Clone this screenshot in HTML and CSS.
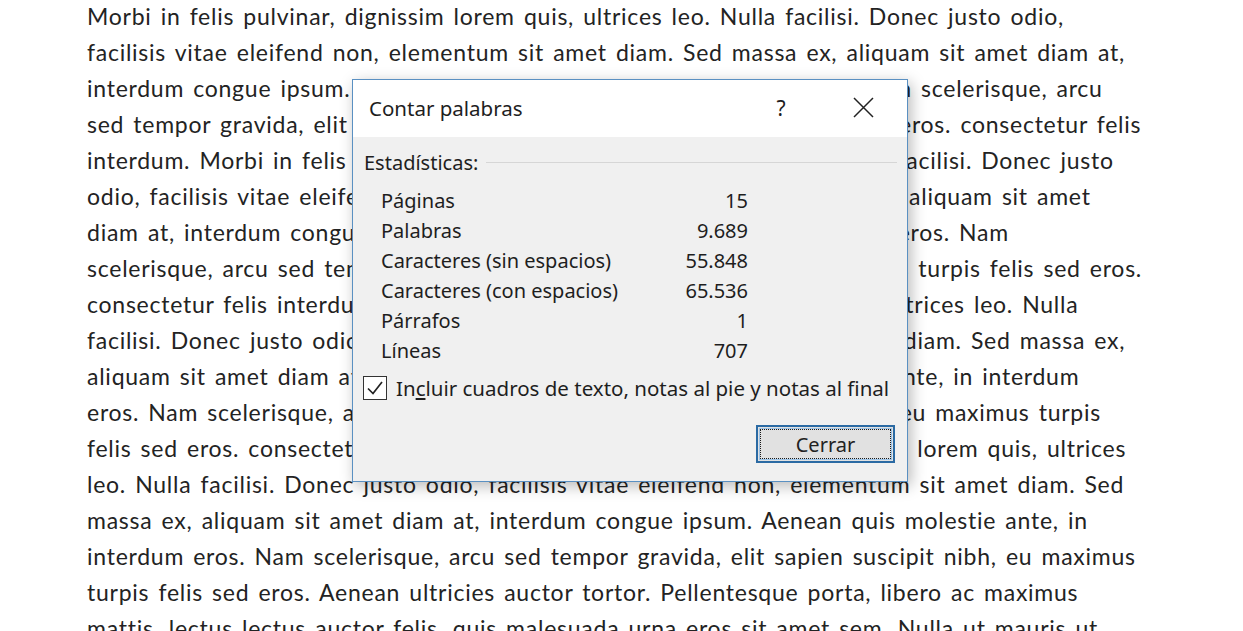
FILE: index.html
```html
<!DOCTYPE html>
<html lang="es">
<head>
<meta charset="utf-8">
<title>Contar palabras</title>
<link rel="stylesheet" href="styles.css">
</head>
<body>
<div class="page">
  <p class="doc">
    <span class="ln">Morbi in felis pulvinar, dignissim lorem quis, ultrices leo. Nulla facilisi. Donec justo odio,</span>
    <span class="ln">facilisis vitae eleifend non, elementum sit amet diam. Sed massa ex, aliquam sit amet diam at,</span>
    <span class="ln">interdum congue ipsum. Aenean quis molestie ante, in interdum eros. Nam scelerisque, arcu</span>
    <span class="ln">sed tempor gravida, elit sapien suscipit nibh, eu maximus turpis felis sed eros. consectetur felis</span>
    <span class="ln">interdum. Morbi in felis pulvinar, dignissim lorem quis, ultrices leo. Nulla facilisi. Donec justo</span>
    <span class="ln">odio, facilisis vitae eleifend non, elementum sit amet diam. Sed massa ex, aliquam sit amet</span>
    <span class="ln">diam at, interdum congue ipsum. Aenean quis molestie ante, in interdum eros. Nam</span>
    <span class="ln">scelerisque, arcu sed tempor gravida, elit sapien suscipit nibh, eu maximus turpis felis sed eros.</span>
    <span class="ln">consectetur felis interdum. Morbi in felis pulvinar, dignissim lorem quis, ultrices leo. Nulla</span>
    <span class="ln">facilisi. Donec justo odio, facilisis vitae eleifend non, elementum sit amet diam. Sed massa ex,</span>
    <span class="ln">aliquam sit amet diam at, interdum congue ipsum. Aenean quis molestie ante, in interdum</span>
    <span class="ln">eros. Nam scelerisque, arcu sed tempor gravida, elit sapien suscipit nibh, eu maximus turpis</span>
    <span class="ln">felis sed eros. consectetur felis interdum. Morbi in felis pulvinar, dignissim lorem quis, ultrices</span>
    <span class="ln">leo. Nulla facilisi. Donec justo odio, facilisis vitae eleifend non, elementum sit amet diam. Sed</span>
    <span class="ln">massa ex, aliquam sit amet diam at, interdum congue ipsum. Aenean quis molestie ante, in</span>
    <span class="ln">interdum eros. Nam scelerisque, arcu sed tempor gravida, elit sapien suscipit nibh, eu maximus</span>
    <span class="ln">turpis felis sed eros. Aenean ultricies auctor tortor. Pellentesque porta, libero ac maximus</span>
    <span class="ln">mattis, lectus lectus auctor felis, quis malesuada urna eros sit amet sem. Nulla ut mauris ut</span>
  </p>
</div>

<div class="dialog" role="dialog" aria-label="Contar palabras">
  <div class="titlebar">
    <span class="title">Contar palabras</span>
    <span class="help">?</span>
    <span class="close">
      <svg width="21" height="21" viewBox="0 0 21 21"><path d="M1 1 L20 20 M20 1 L1 20" stroke="#222" stroke-width="1.5" fill="none"/></svg>
    </span>
  </div>
  <div class="content">
    <div class="group">
      <span class="group-label">Estadísticas:</span>
      <span class="group-line"></span>
    </div>
    <div class="stats">
      <span class="lbl">Páginas</span><span class="val">15</span>
      <span class="lbl">Palabras</span><span class="val">9.689</span>
      <span class="lbl">Caracteres (sin espacios)</span><span class="val">55.848</span>
      <span class="lbl">Caracteres (con espacios)</span><span class="val">65.536</span>
      <span class="lbl">Párrafos</span><span class="val">1</span>
      <span class="lbl">Líneas</span><span class="val">707</span>
    </div>
    <div class="check-row">
      <span class="checkbox">
        <svg width="22" height="22" viewBox="0 0 22 22"><path d="M4 11.5 L9 16.5 L18 5" stroke="#222" stroke-width="1.7" fill="none"/></svg>
      </span>
      <span class="check-text">In<u>c</u>luir cuadros de texto, notas al pie y notas al final</span>
    </div>
    <div class="buttons">
      <button class="btn"><span class="btn-focus">Cerrar</span></button>
    </div>
  </div>
</div>
</body>
</html>
```

FILE: styles.css
```css
html, body {
  margin: 0;
  padding: 0;
  background: #ffffff;
}

.page {
  padding: 0 0 0 87px;
  overflow: hidden;
  height: 631px;
}

.doc {
  margin: -2px 0 0 0;
  font-family: "Lato", "Liberation Sans", sans-serif;
  font-size: 23px;
  letter-spacing: 0.75px;
  word-spacing: 2.5px;
  line-height: 36px;
  color: #232323;
}

.ln {
  display: block;
  white-space: nowrap;
}

.dialog {
  position: absolute;
  left: 352px;
  top: 79px;
  width: 554px;
  height: 401px;
  border: 1px solid #5a90c2;
  background: #f0f0f0;
  box-shadow: 3px 4px 14px rgba(0, 0, 0, 0.28);
  font-family: "Noto Sans", "Open Sans", sans-serif;
  color: #1e1e1e;
  display: flex;
  flex-direction: column;
}

.titlebar {
  box-sizing: border-box;
  flex: 0 0 57px;
  background: #ffffff;
  display: flex;
  align-items: center;
  padding: 0 0 2px 16px;
}

.title {
  font-size: 20.5px;
  flex: 1;
}

.help {
  font-size: 21px;
  width: 20px;
  text-align: center;
  margin-right: 62px;
}

.close {
  display: flex;
  margin-right: 33px;
}

.content {
  flex: 1;
  display: flex;
  flex-direction: column;
  padding: 12px 10px 0 10px;
}

.group {
  display: flex;
  align-items: center;
  gap: 8px;
  flex: 0 0 24px;
  padding-left: 1px;
}

.group-label {
  font-size: 20px;
}

.group-line {
  flex: 1;
  border-top: 1px solid #d6d6d6;
}

.stats {
  display: grid;
  grid-template-columns: 1fr auto;
  width: 367px;
  margin: 9px 0 0 18px;
  grid-auto-rows: 30px;
  align-items: center;
  font-size: 20px;
}

.val {
  text-align: right;
}

.check-row {
  display: flex;
  align-items: center;
  gap: 9px;
  margin-top: 9px;
  flex: 0 0 26px;
}

.checkbox {
  width: 22px;
  height: 22px;
  border: 1px solid #333333;
  background: #ffffff;
  display: flex;
}

.check-text {
  font-size: 20.5px;
}

.buttons {
  display: flex;
  justify-content: flex-end;
  margin-top: 23px;
  padding-right: 2px;
}

.btn {
  box-sizing: border-box;
  width: 139px;
  height: 38px;
  border: 2px solid #2b6aa3;
  background: #e1e1e1;
  padding: 2px;
  margin: 0;
  font-family: "Noto Sans", "Open Sans", sans-serif;
  font-size: 20px;
  color: #222222;
  display: flex;
}

.btn-focus {
  flex: 1;
  border: 1px dotted #1a1a1a;
  box-shadow: 0 0 0 1px #9cc3e6;
  display: flex;
  align-items: center;
  justify-content: center;
}
```
